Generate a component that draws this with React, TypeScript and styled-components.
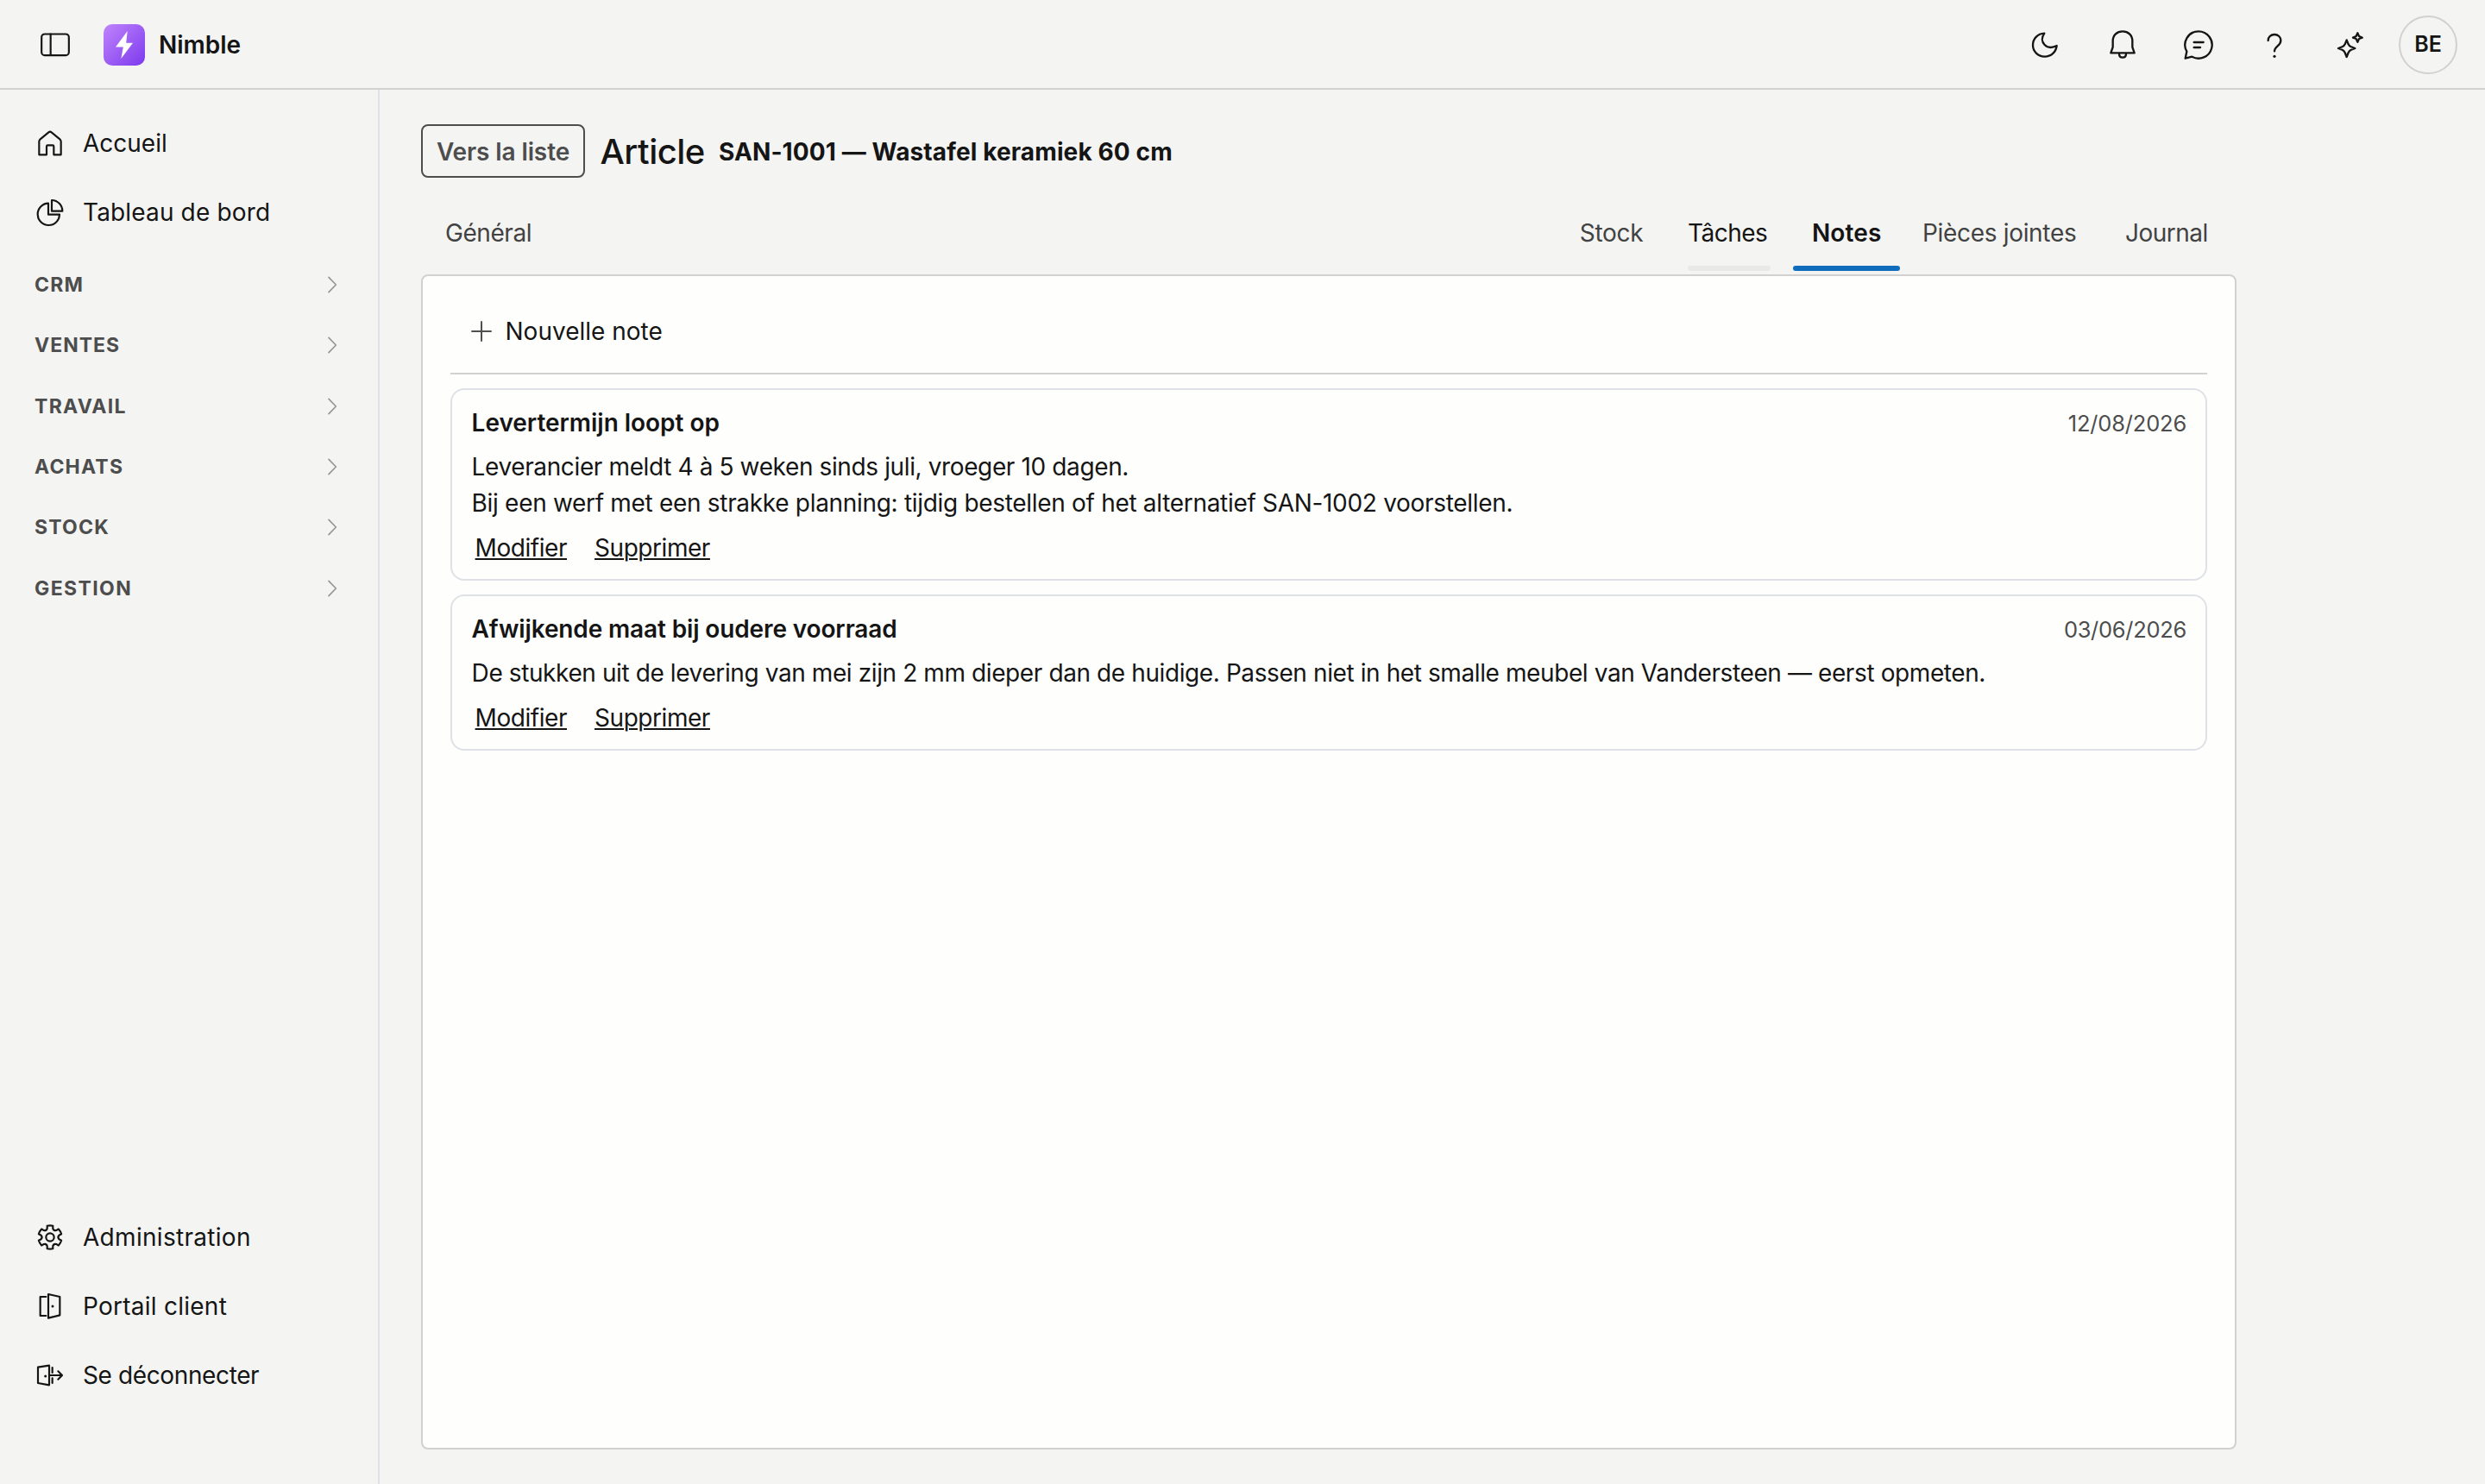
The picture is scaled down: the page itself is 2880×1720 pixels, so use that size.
import React from 'react';
import styled, { createGlobalStyle } from 'styled-components';

const ink = '#151515';
const muted = '#4d4d4d';
const line = '#d1d1d0';
const softLine = '#dee1e6';

const GlobalStyle = createGlobalStyle`
  *, *::before, *::after { box-sizing: border-box; }
  body {
    margin: 0;
    background: #f4f4f3;
    color: ${ink};
    font-family: Inter, "Liberation Sans", sans-serif;
    font-size: 28px;
    line-height: 40px;
  }
`;

const Shell = styled.div`
  display: flex;
  flex-direction: column;
  width: 2880px;
  height: 1720px;
  overflow: hidden;
`;

const Header = styled.header`
  display: flex;
  align-items: center;
  flex: none;
  height: 104px;
  padding: 0 32px 0 44px;
  border-bottom: 2px solid ${line};
`;

const Logo = styled.div`
  display: flex;
  width: 48px;
  height: 48px;
  margin: 2px 16px 0 36px;
  border-radius: 10px;
  background: linear-gradient(135deg, #c084fc 0%, #7c3aed 100%);
`;

const Brand = styled.span`
  margin-top: 2px;
  font-weight: 600;
`;

const Actions = styled.div`
  display: flex;
  align-items: center;
  margin: 2px 0 0 auto;
`;

const Action = styled.span`
  display: flex;
  align-items: center;
  justify-content: center;
  width: 88px;
  height: 88px;
`;

const Avatar = styled.span`
  display: flex;
  align-items: center;
  justify-content: center;
  width: 68px;
  height: 68px;
  margin-left: 12px;
  padding-bottom: 2px;
  border: 2px solid ${line};
  border-radius: 50%;
  font-size: 25px;
  font-weight: 600;
`;

const Body = styled.div`
  display: flex;
  flex: 1;
  min-height: 0;
`;

const Sidebar = styled.nav`
  display: flex;
  flex-direction: column;
  flex: none;
  width: 440px;
  padding: 22px 0 86px;
  border-right: 2px solid ${softLine};
`;

const Spacer = styled.div`
  flex: 1;
`;

const Item = styled.div`
  display: flex;
  align-items: center;
  gap: 20px;
  height: 80px;
  padding-left: 40px;
`;

const Sections = styled.div`
  padding-top: 8.6px;
`;

const Section = styled.div`
  display: flex;
  align-items: center;
  justify-content: space-between;
  height: 70.4px;
  padding: 0 41px 0 40px;
  font-size: 23px;
  font-weight: 700;
  color: ${muted};
`;

const Track = styled.span<{ $ls?: number }>`
  letter-spacing: ${p => p.$ls ?? 0}px;
  white-space: nowrap;
`;

const Icon = styled.svg<{ $size: number; $weight?: number }>`
  flex: none;
  width: ${p => p.$size}px;
  height: ${p => p.$size}px;
  fill: none;
  stroke: currentColor;
  stroke-width: ${p => p.$weight ?? 6.5};
  stroke-linecap: round;
  stroke-linejoin: round;
  overflow: visible;
`;

const Chevron = styled(Icon)`
  color: #969696;
`;

const Main = styled.main`
  display: flex;
  flex-direction: column;
  width: 2152px;
  padding: 40px 0 40px 48px;
`;

const TitleRow = styled.div`
  display: flex;
  align-items: center;
  height: 64px;
`;

const BackButton = styled.button`
  align-self: flex-start;
  width: 190px;
  height: 62px;
  margin-right: 17.5px;
  padding: 2px 0 0;
  border: 2px solid ${muted};
  border-radius: 8px;
  background: transparent;
  color: ${muted};
  font: inherit;
  font-weight: 600;
`;

const Title = styled.h1`
  margin: -1px 16px 0 0;
  font-size: 40px;
  font-weight: 500;
  line-height: 48px;
  letter-spacing: -0.5px;
`;

const Subject = styled.span`
  font-weight: 700;
  letter-spacing: 0.12px;
`;

const Tabs = styled.div`
  display: flex;
  margin: 18px 4px 4px 0;
`;

const Tab = styled.div<{ $w: number; $pad: number; $tone?: 'hover' | 'selected' }>`
  display: flex;
  flex-direction: column;
  justify-content: space-between;
  width: ${p => p.$w}px;
  height: 88px;
  padding-top: 24px;
  color: ${p => (p.$tone ? ink : '#424242')};
  font-weight: ${p => (p.$tone === 'selected' ? 600 : 400)};

  & > span {
    padding-left: ${p => p.$pad}px;
  }

  &::after {
    content: '';
    height: 6px;
    margin: ${p => (p.$tone === 'selected' ? '0 0 0 2px' : '0 24px')};
    border-radius: 3px;
    background: ${p => (p.$tone === 'selected' ? '#0f6cbd' : p.$tone === 'hover' ? '#e9e9e8' : 'transparent')};
  }
`;

const Panel = styled.section`
  display: flex;
  flex-direction: column;
  flex: 1;
  gap: 16px;
  padding: 16px 32px;
  border: 2px solid ${line};
  border-radius: 8px;
  background: #fefefd;
`;

const Toolbar = styled.div`
  display: flex;
  align-items: center;
  gap: 15.5px;
  height: 98px;
  padding-left: 24px;
  border-bottom: 2px solid ${line};
`;

const Note = styled.article`
  padding: 18px 22px 16px 22.6px;
  border: 2px solid ${softLine};
  border-radius: 16px;
`;

const NoteHead = styled.header`
  display: flex;
  justify-content: space-between;
  margin-bottom: 9px;
`;

const NoteTitle = styled.h2`
  margin: 0;
  font-size: 28px;
  font-weight: 600;
  line-height: 40px;
`;

const NoteDate = styled.time`
  padding-top: 1px;
  color: ${muted};
  font-size: 25.5px;
`;

const NoteText = styled.p<{ $ls: number }>`
  margin: 0;
  line-height: 42px;
  letter-spacing: ${p => p.$ls}px;
  white-space: nowrap;
`;

const NoteActions = styled.div`
  display: flex;
  gap: 32px;
  margin-top: 11px;
  padding-left: 4px;
`;

const NoteLink = styled.a`
  letter-spacing: -0.45px;
  text-decoration: underline;
  text-decoration-thickness: 2px;
  text-underline-offset: 2px;
`;

const gearPath = (() => {
  const pt = (deg: number, r: number) => {
    const a = ((deg - 90) * Math.PI) / 180;
    return `${(174 + r * Math.cos(a)).toFixed(1)} ${(131 + r * Math.sin(a)).toFixed(1)}`;
  };
  let d = '';
  for (let k = 0; k < 6; k++) {
    const a = k * 60;
    d += `${k ? 'L' : 'M'}${pt(a - 14, 41)}Q${pt(a, 42)} ${pt(a + 14, 41)}L${pt(a + 18, 32)}Q${pt(a + 30, 25)} ${pt(a + 42, 32)}`;
  }
  return d + 'Z';
})();

const HomeIcon = () => (
  <Icon $size={36} viewBox="120 442 108 108">
    <path d="M136 536V490Q136 486 139 483L169 458Q174 454 179 458L209 483Q212 486 212 490V536H187V507Q187 503 183 503H166Q162 503 162 507V536Z" />
  </Icon>
);
const ChartIcon = () => (
  <Icon $size={36} viewBox="120 683 108 108">
    <path d="M168 706A38 38 0 1 0 207 745H168ZM180 695V733H217A38 38 0 0 0 180 695Z" />
  </Icon>
);
const GearIcon = () => (
  <Icon $size={36} viewBox="120 77 108 108">
    <path d={gearPath} />
    <circle cx="174" cy="131" r="14" />
  </Icon>
);
const DoorIcon = () => (
  <Icon $size={36} viewBox="120 318 108 108">
    <path d="M160 339H140V405H160M168 330L208 339V403L168 413Z" />
    <circle cx="183" cy="372" r="4.5" fill="currentColor" stroke="none" />
  </Icon>
);
const ExitIcon = () => (
  <Icon $size={36} viewBox="120 557 108 108">
    <path d="M132 583L171 577V645L132 638ZM182 584V602M182 621V638M172 611H215M202 597L216 611L202 625" />
    <circle cx="158" cy="614" r="4.5" fill="currentColor" stroke="none" />
  </Icon>
);

const topItems = [
  { label: 'Accueil', ls: 0, icon: <HomeIcon /> },
  { label: 'Tableau de bord', ls: 0.15, icon: <ChartIcon /> },
];
const sections = [
  { label: 'CRM', ls: 1.2 },
  { label: 'VENTES', ls: 1 },
  { label: 'TRAVAIL', ls: 1.3 },
  { label: 'ACHATS', ls: 1.2 },
  { label: 'STOCK', ls: 1.2 },
  { label: 'GESTION', ls: 1.4 },
];
const bottomItems = [
  { label: 'Administration', ls: 0.3, icon: <GearIcon /> },
  { label: 'Portail client', ls: 0.25, icon: <DoorIcon /> },
  { label: 'Se déconnecter', ls: -0.38, icon: <ExitIcon /> },
];
const tabs: { label: string; w: number; pad: number; ls: number; tone?: 'hover' | 'selected' }[] = [
  { label: 'Stock', w: 128, pad: 26.8, ls: -0.3 },
  { label: 'Tâches', w: 144, pad: 24, ls: -0.5, tone: 'hover' },
  { label: 'Notes', w: 126, pad: 24, ls: 0.1, tone: 'selected' },
  { label: 'Pièces jointes', w: 232, pad: 26, ls: -0.32 },
  { label: 'Journal', w: 154, pad: 29, ls: -0.5 },
];
const notes = [
  {
    title: 'Levertermijn loopt op',
    titleLs: -0.03,
    date: '12/08/2026',
    dateLs: -0.2,
    lines: [
      { text: 'Leverancier meldt 4 à 5 weken sinds juli, vroeger 10 dagen.', ls: -0.38 },
      { text: 'Bij een werf met een strakke planning: tijdig bestellen of het alternatief SAN-1002 voorstellen.', ls: -0.31 },
    ],
  },
  {
    title: 'Afwijkende maat bij oudere voorraad',
    titleLs: -0.13,
    date: '03/06/2026',
    dateLs: -0.3,
    lines: [
      {
        text: 'De stukken uit de levering van mei zijn 2 mm dieper dan de huidige. Passen niet in het smalle meubel van Vandersteen — eerst opmeten.',
        ls: -0.4,
      },
    ],
  },
];

export default function App() {
  return (
    <Shell>
      <GlobalStyle />
      <Header>
        <Icon $size={40} viewBox="132 93 120 120">
          <rect x="144.5" y="118.5" width="95" height="74" rx="11" />
          <path d="M176 119V192" />
        </Icon>
        <Logo>
          <svg width="48" height="48" viewBox="0 0 48 48">
            <path d="M27.7 8L14 26.4H22.8L20.3 40L34 21.7H26.2Z" fill="#fff" />
          </svg>
        </Logo>
        <Brand>Nimble</Brand>
        <Actions>
          <Action>
            <Icon $size={44} viewBox="90 60 132 132" $weight={7}>
              <path d="M148 86C124 87 108 105 108 127C108 150 127 167 149 167C171 167 188 152 191 129C173 138 158 135 149 126C139 116 137 101 148 86Z" />
            </Icon>
          </Action>
          <Action>
            <Icon $size={44} viewBox="354 60 132 132" $weight={7}>
              <path d="M386 112C386 92 401 79 420 79C439 79 454 92 454 112V134L461 154H379L386 134ZM408 157C408 165 413 170 420 170C427 170 432 165 432 157" />
            </Icon>
          </Action>
          <Action>
            <Icon $size={44} viewBox="618 60 132 132" $weight={7}>
              <path d="M684 79A47 47 0 1 1 661 167L638 173L643 149A47 47 0 0 1 684 79ZM668 117H701M668 135H690" />
            </Icon>
          </Action>
          <Action>
            <Icon $size={44} viewBox="882 60 132 132" $weight={7}>
              <path d="M926 111C926 98 936 90 948 90C961 90 970 99 970 111C970 130 948 130 948 148" />
              <circle cx="948" cy="166" r="4.8" fill="currentColor" stroke="none" />
            </Icon>
          </Action>
          <Action>
            <Icon $size={44} viewBox="1146 60 132 132" $weight={7}>
              <path d="M1199 109L1205 124Q1208 130 1213 132L1228 138L1213 144Q1208 147 1205 153L1199 168L1193 153Q1190 147 1185 144L1170 138L1185 132Q1190 130 1193 124ZM1237 85L1242 96L1253 101L1242 105L1237 116L1232 105L1221 101L1232 96Z" />
            </Icon>
          </Action>
          <Avatar>BE</Avatar>
        </Actions>
      </Header>
      <Body>
        <Sidebar>
          {topItems.map(i => (
            <Item key={i.label}>
              {i.icon}
              <Track $ls={i.ls}>{i.label}</Track>
            </Item>
          ))}
          <Sections>
            {sections.map(s => (
              <Section key={s.label}>
                <Track $ls={s.ls}>{s.label}</Track>
                <Chevron $size={24} viewBox="1118 84 72 72" $weight={5}>
                  <path d="M1142 94L1167 120L1142 146" />
                </Chevron>
              </Section>
            ))}
          </Sections>
          <Spacer />
          {bottomItems.map(i => (
            <Item key={i.label}>
              {i.icon}
              <Track $ls={i.ls}>{i.label}</Track>
            </Item>
          ))}
        </Sidebar>
        <Main>
          <TitleRow>
            <BackButton>
              <Track $ls={-0.1}>Vers la liste</Track>
            </BackButton>
            <Title>Article</Title>
            <Subject>SAN-1001 — Wastafel keramiek 60 cm</Subject>
          </TitleRow>
          <Tabs>
            <Tab $w={156} $pad={28}>
              <Track $ls={-0.43}>Général</Track>
            </Tab>
            <Spacer />
            {tabs.map(t => (
              <Tab key={t.label} $w={t.w} $pad={t.pad} $tone={t.tone}>
                <Track $ls={t.ls}>{t.label}</Track>
              </Tab>
            ))}
          </Tabs>
          <Panel>
            <Toolbar>
              <Icon $size={24} viewBox="0 0 24 24" $weight={2} color="#505050">
                <path d="M12 1V23M1 12H23" />
              </Icon>
              <Track>Nouvelle note</Track>
            </Toolbar>
            {notes.map(n => (
              <Note key={n.title}>
                <NoteHead>
                  <NoteTitle>
                    <Track $ls={n.titleLs}>{n.title}</Track>
                  </NoteTitle>
                  <NoteDate>
                    <Track $ls={n.dateLs}>{n.date}</Track>
                  </NoteDate>
                </NoteHead>
                {n.lines.map(l => (
                  <NoteText key={l.text} $ls={l.ls}>
                    {l.text}
                  </NoteText>
                ))}
                <NoteActions>
                  <NoteLink>Modifier</NoteLink>
                  <NoteLink>Supprimer</NoteLink>
                </NoteActions>
              </Note>
            ))}
          </Panel>
        </Main>
      </Body>
    </Shell>
  );
}
